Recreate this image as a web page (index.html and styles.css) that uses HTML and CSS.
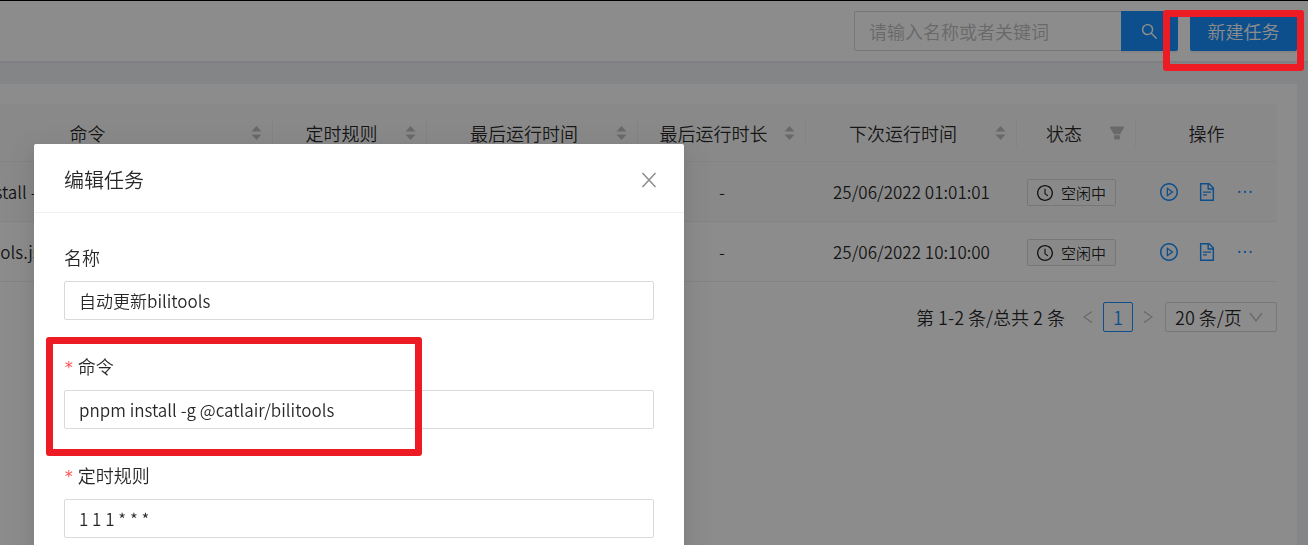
FILE: index.html
```html
<!DOCTYPE html>
<html lang="zh-CN">
<head>
    <meta charset="UTF-8">
    <meta name="viewport" content="width=device-width, initial-scale=1.0">
    <title>定时任务</title>
    <link rel="stylesheet" href="styles.css">
</head>
<body>
    <!-- 图标 -->
    <svg class="sprite" aria-hidden="true">
        <symbol id="i-search" viewBox="64 64 896 896"><path d="M909.6 854.5L649.9 594.8C690.2 542.7 712 479 712 412c0-80.2-31.3-155.4-87.9-212.1-56.6-56.7-132-87.9-212.1-87.9s-155.5 31.3-212.1 87.9C143.2 256.5 112 331.8 112 412c0 80.1 31.3 155.5 87.9 212.1C256.5 680.8 331.8 712 412 712c67 0 130.6-21.8 182.7-62l259.7 259.6a8.2 8.2 0 0011.6 0l43.6-43.5a8.2 8.2 0 000-11.6zM570.4 570.4C528 612.7 471.8 636 412 636s-116-23.3-158.4-65.6C211.3 528 188 471.8 188 412s23.3-116.1 65.6-158.4C296 211.3 352.2 188 412 188s116.1 23.2 158.4 65.6S636 352.2 636 412s-23.3 116.1-65.6 158.4z"/></symbol>
        <symbol id="i-sort" viewBox="0 0 11 16"><path d="M5.500 1L10.500 6.500H.5zM5.500 15L10.500 9.500H.5z"/></symbol>
        <symbol id="i-filter" viewBox="64 64 896 896"><path d="M349 838c0 17.700 14.200 32 31.800 32h262.400c17.600 0 31.800-14.300 31.800-32V642H349v196zm531.100-684H143.900c-24.500 0-39.800 26.700-27.500 48l221.300 376h348.800l221.300-376c12.100-21.300-3.200-48-27.700-48z"/></symbol>
        <symbol id="i-clock" viewBox="64 64 896 896"><path d="M512 64C264.600 64 64 264.600 64 512s200.600 448 448 448 448-200.600 448-448S759.400 64 512 64zm0 820c-205.400 0-372-166.600-372-372s166.600-372 372-372 372 166.600 372 372-166.600 372-372 372z"/><path d="M686.700 638.600L544.100 535.500V288c0-4.400-3.600-8-8-8H488c-4.400 0-8 3.600-8 8v275.400c0 2.600 1.200 5 3.300 6.500l165.400 120.600c3.600 2.600 8.600 1.800 11.200-1.700l28.600-39c2.600-3.700 1.800-8.700-1.800-11.200z"/></symbol>
        <symbol id="i-play" viewBox="64 64 896 896"><path d="M512 64C264.600 64 64 264.600 64 512s200.600 448 448 448 448-200.600 448-448S759.400 64 512 64zm0 820c-205.400 0-372-166.600-372-372s166.600-372 372-372 372 166.600 372 372-166.600 372-372 372z"/><path d="M719.400 499.100l-296.100-215A15.900 15.900 0 00398 297v430c0 13.100 14.800 20.500 25.300 12.900l296.100-215a15.900 15.900 0 000-25.800zm-257.600 134V390.900L628.500 512 461.800 633.100z"/></symbol>
        <symbol id="i-file" viewBox="64 64 896 896"><path d="M854.600 288.600L639.400 73.400c-6-6-14.100-9.400-22.600-9.400H192c-17.700 0-32 14.300-32 32v832c0 17.700 14.300 32 32 32h640c17.700 0 32-14.300 32-32V311.300c0-8.500-3.400-16.700-9.400-22.700zM790.200 326H602V137.800L790.200 326zm1.800 562H232V136h302v216a42 42 0 0042 42h216v494zM504 618H320c-4.400 0-8 3.600-8 8v48c0 4.400 3.600 8 8 8h184c4.400 0 8-3.600 8-8v-48c0-4.400-3.600-8-8-8zM312 490v48c0 4.400 3.600 8 8 8h384c4.400 0 8-3.600 8-8v-48c0-4.400-3.600-8-8-8H320c-4.400 0-8 3.600-8 8z"/></symbol>
        <symbol id="i-more" viewBox="64 64 896 896"><path d="M176 511a56 56 0 10112 0 56 56 0 10-112 0zm280 0a56 56 0 10112 0 56 56 0 10-112 0zm280 0a56 56 0 10112 0 56 56 0 10-112 0z"/></symbol>
        <symbol id="i-left" viewBox="0 0 10 14"><path d="M9 1.500L1 7l8 5.500" fill="none" stroke="currentColor" stroke-width="1.300"/></symbol>
        <symbol id="i-right" viewBox="0 0 10 14"><path d="M1 1.500L9 7l-8 5.500" fill="none" stroke="currentColor" stroke-width="1.300"/></symbol>
        <symbol id="i-down" viewBox="0 0 14 12"><path d="M1 2l6 8 6-8" fill="none" stroke="currentColor" stroke-width="1.300"/></symbol>
        <symbol id="i-close" viewBox="0 0 16 16"><path d="M1.500 1l13 14M14.500 1l-13 14" fill="none" stroke="currentColor" stroke-width="1.500"/></symbol>
    </svg>

    <div class="page">
        <!-- 顶部工具栏 -->
        <div class="header">
            <div class="search">
                <input class="search-input" type="text" placeholder="请输入名称或者关键词" aria-label="搜索">
                <button class="btn search-btn" type="button" aria-label="搜索"><svg class="icon"><use href="#i-search"/></svg></button>
            </div>
            <button class="btn create-btn" type="button">新建任务</button>
        </div>

        <!-- 任务列表 -->
        <div class="card">
            <table class="table">
                <colgroup>
                    <col>
                    <col class="col-rule">
                    <col class="col-time">
                    <col class="col-cost">
                    <col class="col-time">
                    <col class="col-status">
                    <col class="col-action">
                </colgroup>
                <thead>
                    <tr>
                        <th><div class="th"><span>命令</span><svg class="sorter"><use href="#i-sort"/></svg></div></th>
                        <th><div class="th"><span>定时规则</span><svg class="sorter"><use href="#i-sort"/></svg></div></th>
                        <th><div class="th"><span>最后运行时间</span><svg class="sorter"><use href="#i-sort"/></svg></div></th>
                        <th><div class="th"><span>最后运行时长</span><svg class="sorter"><use href="#i-sort"/></svg></div></th>
                        <th><div class="th"><span>下次运行时间</span><svg class="sorter"><use href="#i-sort"/></svg></div></th>
                        <th><div class="th"><span>状态</span><svg class="filter"><use href="#i-filter"/></svg></div></th>
                        <th><div class="th"><span>操作</span></div></th>
                    </tr>
                </thead>
                <tbody>
                    <tr class="active">
                        <td class="command">pnpm install -g</td>
                        <td></td>
                        <td></td>
                        <td>-</td>
                        <td>25/06/2022 01:01:01</td>
                        <td class="status"><span class="tag"><svg class="icon"><use href="#i-clock"/></svg>空闲中</span></td>
                        <td>
                            <div class="actions">
                                <a href="#" aria-label="运行"><svg class="icon"><use href="#i-play"/></svg></a>
                                <a href="#" aria-label="日志"><svg class="icon"><use href="#i-file"/></svg></a>
                                <a href="#" aria-label="更多"><svg class="icon"><use href="#i-more"/></svg></a>
                            </div>
                        </td>
                    </tr>
                    <tr>
                        <td class="command">run bilitools.js</td>
                        <td></td>
                        <td></td>
                        <td>-</td>
                        <td>25/06/2022 10:10:00</td>
                        <td class="status"><span class="tag"><svg class="icon"><use href="#i-clock"/></svg>空闲中</span></td>
                        <td>
                            <div class="actions">
                                <a href="#" aria-label="运行"><svg class="icon"><use href="#i-play"/></svg></a>
                                <a href="#" aria-label="日志"><svg class="icon"><use href="#i-file"/></svg></a>
                                <a href="#" aria-label="更多"><svg class="icon"><use href="#i-more"/></svg></a>
                            </div>
                        </td>
                    </tr>
                </tbody>
            </table>

            <!-- 分页 -->
            <div class="pagination">
                <span class="total">第 1-2 条/总共 2 条</span>
                <button class="page-arrow" type="button" aria-label="上一页" disabled><svg><use href="#i-left"/></svg></button>
                <button class="page-num" type="button">1</button>
                <button class="page-arrow" type="button" aria-label="下一页" disabled><svg><use href="#i-right"/></svg></button>
                <div class="page-size">
                    <select aria-label="每页条数">
                        <option>20 条/页</option>
                        <option>50 条/页</option>
                    </select>
                    <svg class="page-size-icon"><use href="#i-down"/></svg>
                </div>
            </div>
        </div>
    </div>

    <div class="mask"></div>

    <!-- 编辑弹窗 -->
    <div class="modal" role="dialog" aria-labelledby="modal-title">
        <div class="modal-header">
            <span id="modal-title">编辑任务</span>
            <button class="modal-close" type="button" aria-label="关闭"><svg><use href="#i-close"/></svg></button>
        </div>
        <form class="modal-body">
            <div class="form-item">
                <label for="name">名称</label>
                <input id="name" type="text" value="自动更新bilitools">
            </div>
            <div class="form-item required">
                <label for="command">命令</label>
                <input id="command" type="text" value="pnpm install -g @catlair/bilitools">
            </div>
            <div class="form-item required">
                <label for="schedule">定时规则</label>
                <input id="schedule" type="text" value="1 1 1 * * *">
            </div>
        </form>
    </div>

    <!-- 红框标注 -->
    <div class="mark mark-create"></div>
    <div class="mark mark-command"></div>
</body>
</html>
```
FILE: styles.css
```css
*{
    box-sizing: border-box;
}
html,body{
    height: 100%;
    margin: 0;
}
body{
    overflow: hidden;
    color: rgba(0,0,0,.85);
    background-color: #f0f2f5;
    font-family: "Noto Sans CJK SC", sans-serif;
    font-size: 17px;
    font-weight: 350;
    line-height: 28px;
}
input,button,select{
    margin: 0;
    font: inherit;
    color: inherit;
}
svg{
    display: block;
    fill: currentColor;
}
.sprite{
    position: absolute;
    width: 0;
    height: 0;
}
.page{
    display: flex;
    flex-direction: column;
    min-height: 100%;
    border-top: 1px solid #000;
}
/* 顶部工具栏 */
.header{
    display: flex;
    justify-content: flex-end;
    gap: 12px;
    padding: 10px 11px;
    background-color: #fff;
    box-shadow: 0 1px 4px rgba(0,21,41,.08);
}
.search{
    display: flex;
    width: 324px;
}
.search-input{
    flex: 1;
    min-width: 0;
    height: 40px;
    padding: 0 14px;
    border: 1px solid #d9d9d9;
    border-right: 0;
    border-radius: 2px 0 0 2px;
    font-size: 18px;
    background-color: #fff;
}
.search-input::placeholder{
    color: #bfbfbf;
}
.btn{
    display: flex;
    align-items: center;
    justify-content: center;
    height: 40px;
    padding: 0;
    border: 0;
    border-radius: 2px;
    color: #fff;
    font-size: 18px;
    background-color: #1890ff;
    box-shadow: 0 2px 0 rgba(0,0,0,.05);
}
.search-btn{
    width: 57px;
    border-radius: 0 2px 2px 0;
}
.search-btn .icon{
    width: 17px;
    height: 17px;
}
.create-btn{
    width: 107px;
}
/* 任务列表 */
.card{
    flex: 1;
    margin: 23px 11px 0 -101px;
    padding: 20px;
    background-color: #fff;
}
.table{
    width: 100%;
    table-layout: fixed;
    border-collapse: separate;
    border-spacing: 0;
    text-align: center;
}
.col-rule{
    width: 154px;
}
.col-time{
    width: 211px;
}
.col-cost{
    width: 168px;
}
.col-status{
    width: 119px;
}
.col-action{
    width: 141px;
}
.table th{
    height: 58px;
    padding: 0;
    border-bottom: 1px solid #f0f0f0;
    font-size: 18px;
    font-weight: 350;
    background-color: #fafafa;
}
.th{
    display: flex;
    align-items: center;
    height: 28px;
    padding: 0 10px;
    border-right: 1px solid #f0f0f0;
}
th:last-child .th{
    border-right: 0;
}
.th span{
    flex: 1;
    white-space: nowrap;
}
.sorter{
    width: 11px;
    height: 16px;
    margin-left: 5px;
    color: #bfbfbf;
}
.filter{
    width: 16px;
    height: 16px;
    margin-left: 8px;
    color: #bfbfbf;
}
.table td{
    height: 60px;
    padding: 0;
    border-bottom: 1px solid #f0f0f0;
    white-space: nowrap;
}
.table .active td{
    background-color: #fafafa;
}
.table .command{
    padding-left: 10px;
    text-align: left;
}
.table .status{
    padding-left: 10px;
    text-align: left;
}
.tag{
    display: inline-flex;
    align-items: center;
    gap: 8px;
    height: 27px;
    padding: 0 9px;
    border: 1px solid #d9d9d9;
    border-radius: 2px;
    font-size: 15px;
    vertical-align: middle;
    background-color: #fafafa;
}
.tag .icon{
    width: 16px;
    height: 16px;
}
.actions{
    display: flex;
    justify-content: center;
    gap: 20px;
}
.actions a{
    color: #1890ff;
}
.actions .icon{
    width: 18px;
    height: 18px;
}
/* 分页 */
.pagination{
    display: flex;
    align-items: center;
    justify-content: flex-end;
    margin-top: 20px;
    font-size: 18px;
}
.total{
    margin-right: 8px;
}
.page-arrow{
    display: flex;
    align-items: center;
    justify-content: center;
    width: 30px;
    height: 30px;
    padding: 0;
    border: 0;
    color: #bfbfbf;
    background: none;
}
.page-arrow svg{
    width: 10px;
    height: 14px;
}
.page-num{
    width: 30px;
    height: 30px;
    padding: 0;
    border: 1px solid #1890ff;
    border-radius: 2px;
    color: #1890ff;
    line-height: 28px;
    background-color: #fff;
}
.page-size{
    position: relative;
    width: 112px;
    margin-left: 2px;
}
.page-size select{
    display: block;
    width: 100%;
    height: 30px;
    padding: 0 9px;
    border: 1px solid #d9d9d9;
    border-radius: 2px;
    appearance: none;
    background-color: #fff;
}
.page-size-icon{
    position: absolute;
    top: 9px;
    right: 14px;
    width: 14px;
    height: 12px;
    color: #bfbfbf;
    pointer-events: none;
}
/* 弹窗 */
.mask{
    position: fixed;
    top: 0;
    right: 0;
    bottom: 0;
    left: 0;
    background-color: rgba(0,0,0,.45);
}
.modal{
    position: absolute;
    top: 144px;
    left: 34px;
    width: 650px;
    border-radius: 2px;
    background-color: #fff;
    box-shadow: 0 3px 6px -4px rgba(0,0,0,.12), 0 6px 16px 0 rgba(0,0,0,.08), 0 9px 28px 8px rgba(0,0,0,.05);
}
.modal-header{
    display: flex;
    align-items: center;
    justify-content: space-between;
    padding: 22px 27px 18px 30px;
    border-bottom: 1px solid #f0f0f0;
    font-size: 20px;
}
.modal-close{
    padding: 0;
    border: 0;
    color: #8c8c8c;
    background: none;
}
.modal-close svg{
    width: 16px;
    height: 16px;
}
.modal-body{
    padding: 30px;
}
.form-item{
    margin-bottom: 32px;
}
.form-item label{
    display: flex;
    height: 28px;
    margin-bottom: 10px;
    font-size: 18px;
}
.form-item.required label::before{
    content: "*";
    margin-right: 4px;
    padding-top: 2px;
    color: #ff4d4f;
    font-family: "DejaVu Sans Mono", monospace;
    font-size: 16px;
}
.form-item input{
    display: block;
    width: 100%;
    height: 39px;
    padding: 0 14px;
    border: 1px solid #d9d9d9;
    border-radius: 2px;
    background-color: #fff;
}
/* 红框标注 */
.mark{
    position: absolute;
    border: 7px solid #ed1c24;
    border-radius: 3px;
    pointer-events: none;
}
.mark-create{
    top: 10px;
    right: 4px;
    width: 141px;
    height: 61px;
}
.mark-command{
    top: 337px;
    left: 46px;
    width: 376px;
    height: 119px;
}
```
